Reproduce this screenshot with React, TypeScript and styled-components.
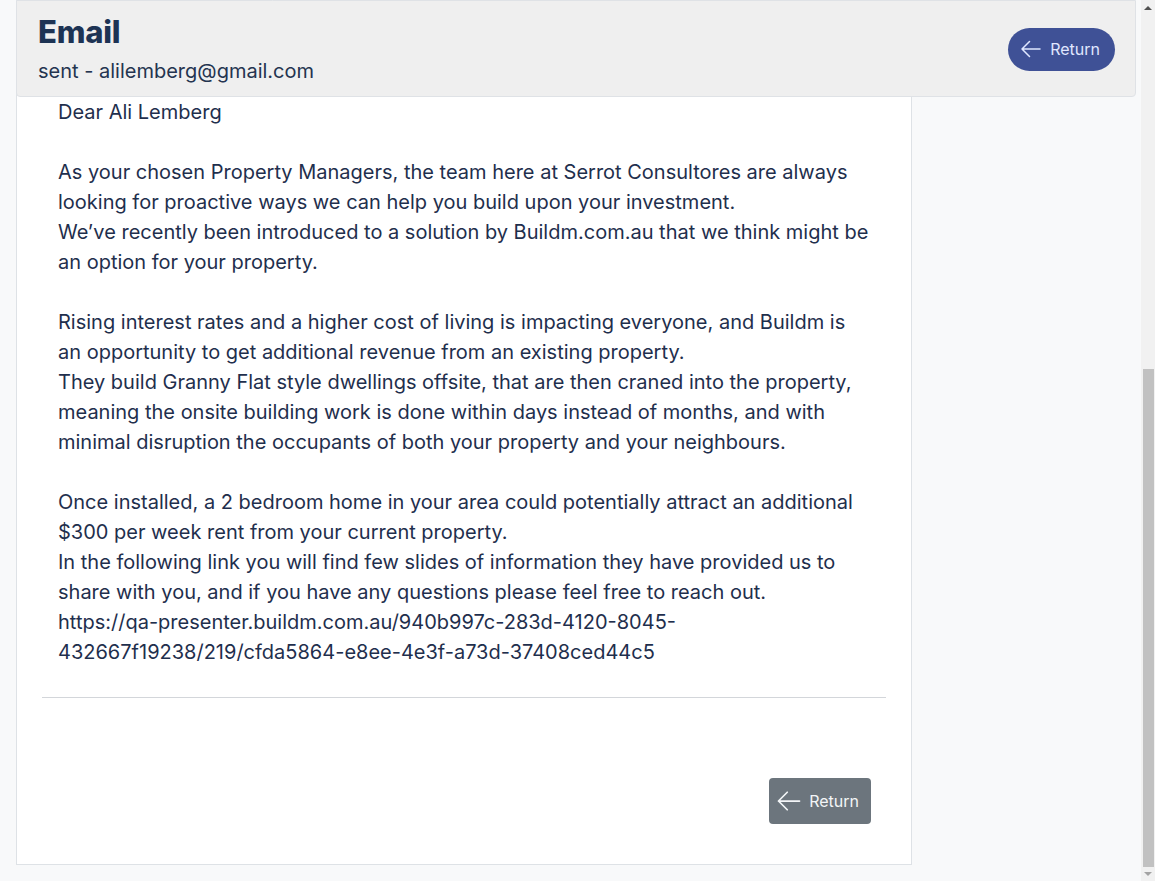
import React, { useLayoutEffect, useRef } from "react";
import styled, { createGlobalStyle } from "styled-components";

const Global = createGlobalStyle`
  html, body { margin: 0; padding: 0; height: 100%; overflow: hidden; }
  body {
    background: #f8f9fa;
    font-family: Inter, "Noto Sans", sans-serif;
    color: #1f2f4d;
  }
  * { box-sizing: border-box; }
`;

const Frame = styled.div`
  display: flex;
  height: 100vh;
`;

const Scroller = styled.div`
  flex: 1;
  min-width: 0;
  height: 100%;
  overflow-y: scroll;
  background: #f8f9fa;
  scrollbar-width: none;
  &::-webkit-scrollbar { display: none; }
`;

const ScrollTrack = styled.div`
  width: 14px;
  flex: none;
  height: 100%;
  background: #f1f1f1;
  display: flex;
  flex-direction: column;
`;

const ScrollButton = styled.div`
  height: 14px;
  flex: none;
  display: flex;
  align-items: center;
  justify-content: center;
`;

const ScrollSpace = styled.div`
  flex: 1;
`;

const ScrollThumb = styled.div`
  height: 498px;
  flex: none;
  margin: 0 1px 0 2px;
  background: #c1c1c1;
`;

const Page = styled.div`
  padding: 0 5px 16px 16px;
`;

const Header = styled.header`
  position: sticky;
  top: 0;
  z-index: 2;
  height: 97px;
  background: #efefef;
  border: 1px solid #dfe2e6;
  border-radius: 0 0 4px 4px;
  display: flex;
  align-items: center;
  justify-content: space-between;
  padding: 0 20px 0 21px;
`;

const TitleBlock = styled.div`
  display: flex;
  flex-direction: column;
  gap: 8px;
  margin-top: 0;
`;

const Title = styled.h1`
  margin: 0;
  font-size: 31px;
  line-height: 36px;
  font-weight: 800;
  color: #1d3354;
  letter-spacing: -0.2px;
`;

const Subtitle = styled.div`
  font-size: 20px;
  line-height: 26px;
  color: #243450;
`;

const PillButton = styled.button`
  display: flex;
  align-items: center;
  gap: 7px;
  height: 43px;
  padding: 0 15px 0 11px;
  border: none;
  border-radius: 22px;
  background: #3f5196;
  color: #e0e7ff;
  font-family: Inter, sans-serif;
  font-size: 16px;
  cursor: pointer;
  margin-top: 1px;
`;

const Card = styled.main`
  width: 896px;
  margin-top: 16px;
  background: #fff;
  border: 1px solid #dee2e6;
  padding: 24px 25px 40px 25px;
`;

const Meta = styled.div`
  display: flex;
  flex-direction: column;
  gap: 14px;
  padding: 0 16px 32px;
  height: 588px;
`;

const MetaRow = styled.div`
  display: flex;
  gap: 12px;
  font-size: 16px;
  line-height: 24px;
`;

const MetaLabel = styled.span`
  width: 90px;
  color: #6c757d;
`;

const Body = styled.div`
  padding: 0 16px;
  font-size: 20px;
  line-height: 30px;
  color: #1f2f4d;
`;

const Para = styled.p`
  margin: 0 0 30px;
  &:last-child { margin-bottom: 0; }
`;

const Divider = styled.hr`
  border: none;
  border-top: 1px solid #d3d6da;
  margin: 30px 0 80px;
`;

const Footer = styled.div`
  display: flex;
  justify-content: flex-end;
  padding-right: 15px;
`;

const GrayButton = styled.button`
  display: flex;
  align-items: center;
  gap: 6px;
  height: 46px;
  padding: 0 12px 0 6px;
  border: none;
  border-radius: 4px;
  background: #6c757d;
  color: #f3f5f7;
  font-family: Inter, sans-serif;
  font-size: 16px;
  cursor: pointer;
`;

function ArrowLeftIcon({ size }: { size: number }) {
  return (
    <svg
      width={size}
      height={size}
      viewBox="0 0 24 24"
      fill="none"
      stroke="currentColor"
      strokeWidth={1.5}
      strokeLinecap="round"
      strokeLinejoin="round"
    >
      <path d="M10.5 19.5 3 12m0 0 7.5-7.5M3 12h18" />
    </svg>
  );
}

function Triangle({ up, color }: { up: boolean; color: string }) {
  return (
    <svg width="8" height="5" viewBox="0 0 8 5">
      <path d={up ? "M0 5 L4 1 L8 5 Z" : "M0 0 L4 4 L8 0 Z"} fill={color} />
    </svg>
  );
}

export default function App() {
  const ref = useRef<HTMLDivElement>(null);
  useLayoutEffect(() => {
    const el = ref.current;
    if (el) el.scrollTop = el.scrollHeight;
  }, []);
  return (
    <>
      <Global />
      <Frame>
        <Scroller ref={ref}>
          <Page>
            <Header>
              <TitleBlock>
                <Title>Email</Title>
                <Subtitle>sent - alilemberg@gmail.com</Subtitle>
              </TitleBlock>
              <PillButton>
                <ArrowLeftIcon size={24} />
                Return
              </PillButton>
            </Header>
            <Card>
              <Meta>
                <MetaRow><MetaLabel>To</MetaLabel>alilemberg@gmail.com</MetaRow>
                <MetaRow><MetaLabel>Status</MetaLabel>sent</MetaRow>
                <MetaRow><MetaLabel>Subject</MetaLabel>An opportunity for your property</MetaRow>
              </Meta>
              <Body>
                <Para>Dear Ali Lemberg</Para>
                <Para>
                  As your chosen Property Managers, the team here at Serrot Consultores are always looking for proactive ways we can help you build upon your investment.
                  <br />
                  We’ve recently been introduced to a solution by Buildm.com.au that we think might be an option for your property.
                </Para>
                <Para>
                  Rising interest rates and a higher cost of living is impacting everyone, and Buildm is an opportunity to get additional revenue from an existing property.
                  <br />
                  They build Granny Flat style dwellings offsite, that are then craned into the property, meaning the onsite building work is done within days instead of months, and with minimal disruption the occupants of both your property and your neighbours.
                </Para>
                <Para>
                  Once installed, a 2 bedroom home in your area could potentially attract an additional $300 per week rent from your current property.
                  <br />
                  In the following link you will find few slides of information they have provided us to share with you, and if you have any questions please feel free to reach out.
                  <br />
                  https://qa-presenter.buildm.com.au/940b997c-283d-4120-8045-432667f19238/219/cfda5864-e8ee-4e3f-a73d-37408ced44c5
                </Para>
              </Body>
              <Divider />
              <Footer>
                <GrayButton>
                  <ArrowLeftIcon size={28} />
                  Return
                </GrayButton>
              </Footer>
            </Card>
          </Page>
        </Scroller>
        <ScrollTrack aria-hidden="true">
          <ScrollButton>
            <Triangle up color="#505050" />
          </ScrollButton>
          <ScrollSpace />
          <ScrollThumb />
          <ScrollButton>
            <Triangle up={false} color="#a3a3a3" />
          </ScrollButton>
        </ScrollTrack>
      </Frame>
    </>
  );
}
